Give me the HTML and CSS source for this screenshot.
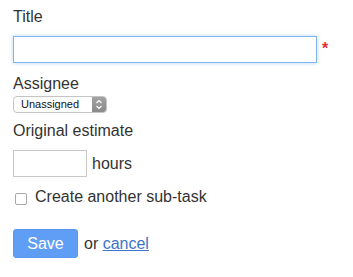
FILE: index.html
```html
<!DOCTYPE html>
<html lang="en">
<head>
    <meta charset="UTF-8">
    <title>Create sub-task</title>
    <link rel="stylesheet" href="styles.css">
</head>
<body>
    <form class="form">
        <div class="field">
            <label class="label">Title</label>
            <div class="row">
                <input class="text-input title-input" type="text">
                <span class="required">*</span>
            </div>
        </div>

        <div class="field field-assignee">
            <label class="label">Assignee</label>
            <div class="select">
                <span class="select-value">Unassigned</span>
                <span class="select-arrow">
                    <svg width="8" height="11" viewBox="0 0 8 11">
                        <path d="M1.5 4 L4 1.5 L6.5 4 M1.5 7 L4 9.5 L6.5 7" fill="none" stroke="#ffffff" stroke-width="1.2"/>
                    </svg>
                </span>
            </div>
        </div>

        <div class="field">
            <label class="label">Original estimate</label>
            <div class="row">
                <input class="text-input hours-input" type="text">
                <span class="unit">hours</span>
            </div>
        </div>

        <div class="check-row">
            <span class="checkbox"></span>
            <span>Create another sub-task</span>
        </div>

        <div class="actions">
            <button class="save" type="button">Save</button>
            <span class="or">or <a href="#" class="cancel">cancel</a></span>
        </div>
    </form>
</body>
</html>
```

FILE: styles.css
```css
body {
    margin: 0;
    font-family: "Liberation Sans", Arial, sans-serif;
    font-size: 16px;
    color: #333333;
    background: #ffffff;
}
.form {
    padding: 8px 13px;
}
.field {
    margin-bottom: 8px;
}
.label {
    display: block;
    line-height: 18px;
    margin-bottom: 10px;
}
.row {
    display: flex;
    align-items: center;
}
.text-input {
    box-sizing: border-box;
    height: 27px;
    border: 1px solid #c8c8c8;
    margin: 0;
    padding: 0 4px;
    font: inherit;
    outline: none;
}
.title-input {
    width: 304px;
    border-color: #82b6ea;
    box-shadow: 0 0 4px rgba(130, 182, 234, 0.6);
}
.required {
    color: #e5302a;
    font-size: 16px;
    font-weight: bold;
    margin-left: 5px;
    margin-top: -2px;
}
.field-assignee {
    margin-top: 12px;
    margin-bottom: 9px;
}
.field-assignee .label {
    margin-bottom: 3px;
}
.select {
    display: flex;
    box-sizing: border-box;
    width: 94px;
    height: 17px;
    border: 1px solid #c4c4c4;
    border-radius: 4px;
    overflow: hidden;
    font-size: 11px;
    color: #111111;
}
.select-value {
    flex: 1;
    line-height: 15px;
    padding-left: 7px;
}
.select-arrow {
    width: 14px;
    display: flex;
    align-items: center;
    justify-content: center;
    background: linear-gradient(#a2a2a2, #8a8a8a);
}
.hours-input {
    width: 74px;
}
.unit {
    margin-left: 5px;
}
.check-row {
    display: flex;
    align-items: center;
    gap: 8px;
    margin-top: 11px;
    padding-left: 2px;
}
.checkbox {
    box-sizing: border-box;
    width: 12px;
    height: 12px;
    border: 1px solid #a8a8a8;
    border-radius: 2px;
    margin-top: 3px;
}
.actions {
    display: flex;
    align-items: center;
    gap: 6px;
    margin-top: 23px;
}
.save {
    width: 65px;
    height: 29px;
    border: 1px solid #5a95ee;
    border-radius: 3px;
    background: #609ef6;
    color: #ffffff;
    font: inherit;
    padding: 0;
}
.cancel {
    color: #3b73c9;
}
```
